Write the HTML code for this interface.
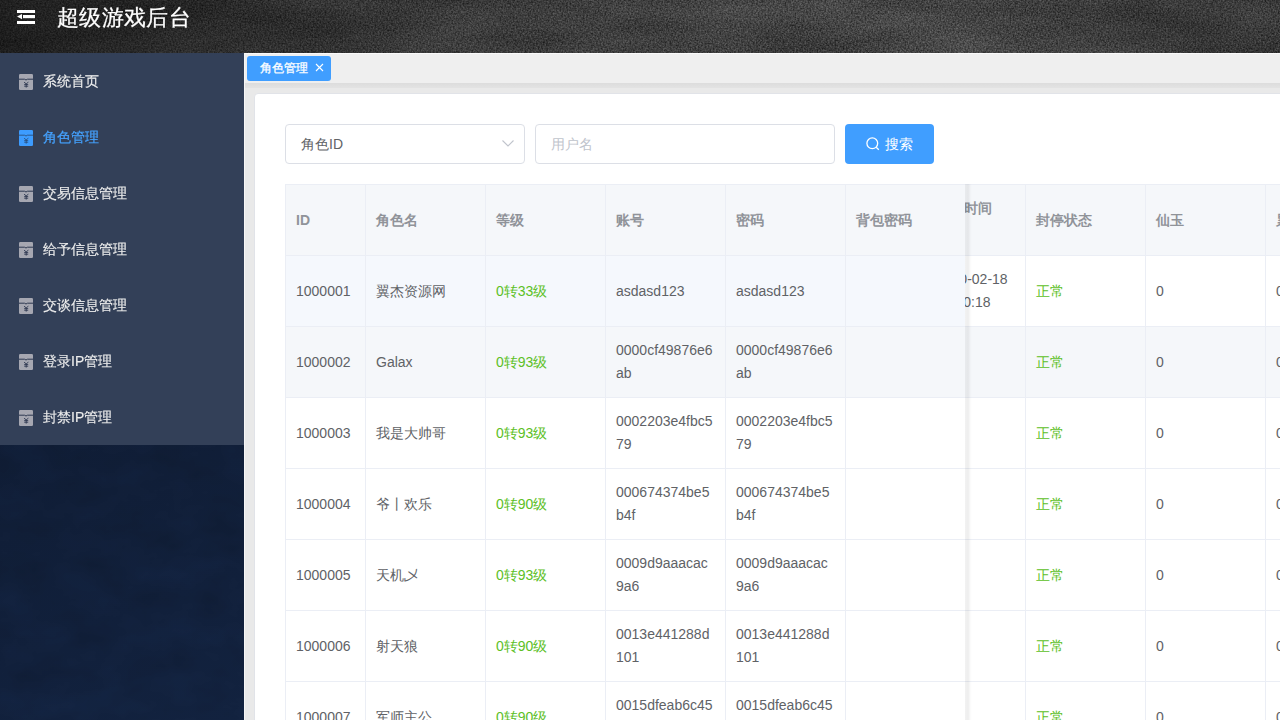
<!DOCTYPE html>
<html><head><meta charset="utf-8">
<style>
*{margin:0;padding:0;box-sizing:border-box;}
html,body{width:1280px;height:720px;overflow:hidden;font-family:"Liberation Sans",sans-serif;font-size:14px;}
body{position:relative;background:#f0f0f0;}
.hdr{position:absolute;left:0;top:0;width:1280px;height:53px;background:linear-gradient(90deg,#1d1d1d 0%,#242424 10%,#2e2e2e 20%,#373737 32%,#3d3d3d 45%,#424242 58%,#444 70%,#424242 80%,#3b3b3b 89%,#393939 95%,#3c3c3c 100%);overflow:hidden;isolation:isolate;}
.hdr svg.noise{position:absolute;left:0;top:0;}
.hdr .ham{position:absolute;left:17px;top:10px;}
.hdr .title{position:absolute;left:57px;top:3.5px;font-size:22.4px;letter-spacing:.35px;color:#fff;-webkit-text-stroke:.25px #fff;line-height:28px;}
.side{position:absolute;left:0;top:53px;width:244px;height:667px;isolation:isolate;background:linear-gradient(160deg,#0e1a2f 0%,#0f1c34 45%,#12223f 100%);overflow:hidden;}
.menu{position:absolute;left:0;top:0;width:244px;height:392px;background:#334058;}
.mi{position:absolute;left:0;width:244px;height:56px;}
.mi .ic{position:absolute;left:19px;top:21px;}
.mi .tx{position:absolute;left:43px;top:20px;line-height:16px;font-size:14px;color:#ececec;white-space:nowrap;-webkit-text-stroke:.15px #ececec;}
.mi.act .tx{color:#45a2ff;-webkit-text-stroke:.2px #45a2ff;}
.main{position:absolute;left:244px;top:53px;width:1036px;height:667px;background:#e9e9e9;border-left:1px solid #f6f6f6;}
.tabbar{position:absolute;left:0;top:0;width:1036px;height:30px;background:#efefef;border-top:1px solid #fafafa;}
.tabshadow{position:absolute;left:0;top:30px;width:1036px;height:5px;background:linear-gradient(#dcdcdc,#e3e3e3);}
.tag{position:absolute;left:2px;top:2px;width:84px;height:25px;background:#409eff;border-radius:3px;color:#fff;font-size:12px;line-height:25px;padding-left:13px;white-space:nowrap;-webkit-text-stroke:.3px #fff;}
.tag svg{position:absolute;left:68px;top:7px;}
.card{position:absolute;left:11px;top:41px;width:1040px;height:640px;background:#fff;border:1px solid #e6e6e6;border-radius:4px;}

.card2{position:absolute;left:254px;top:93px;width:1030px;height:640px;background:#fff;border:1px solid #e1e3e8;border-radius:4px;}
.sel{position:absolute;left:285px;top:124px;width:240px;height:40px;border:1px solid #dcdfe6;border-radius:4px;background:#fff;}
.sel .t{position:absolute;left:15px;top:0;line-height:38px;color:#606266;font-size:14px;}
.sel svg{position:absolute;left:216px;top:15px;}
.inp{position:absolute;left:535px;top:124px;width:300px;height:40px;border:1px solid #dcdfe6;border-radius:4px;background:#fff;}
.inp .t{position:absolute;left:15px;top:0;line-height:38px;color:#c0c4cc;font-size:14px;}
.btn{position:absolute;left:845px;top:124px;width:89px;height:40px;border-radius:4px;background:#409eff;color:#fff;}
.btn svg{position:absolute;left:21px;top:12.8px;}
.btn .t{position:absolute;left:40px;top:0;line-height:40px;font-size:14px;}
.tbl{position:absolute;left:285px;top:184px;width:995px;height:536px;overflow:hidden;background:#fff;}
.hl{position:absolute;height:1px;background:#ebeef5;}
.vl{position:absolute;width:1px;background:#ebeef5;}
.bg{position:absolute;}
.c{position:absolute;display:flex;align-items:center;padding-left:10px;line-height:23px;font-size:14px;color:#606266;white-space:nowrap;}
.c.h{color:#909399;font-weight:bold;}
.c.g{color:#5cc026;}
.shadow{position:absolute;top:0;width:7px;height:536px;background:linear-gradient(90deg,rgba(0,0,0,.05) 0,rgba(0,0,0,.065) 45%,rgba(0,0,0,.02) 75%,rgba(0,0,0,0) 100%);}
</style></head>
<body>
<div class="hdr">
  <svg class="noise" width="1280" height="53" style="mix-blend-mode:overlay"><filter id="nz" x="0" y="0" width="100%" height="100%" color-interpolation-filters="sRGB"><feTurbulence type="fractalNoise" baseFrequency="0.6" numOctaves="3" seed="3"/><feColorMatrix values="1.4 0 0 0 -0.2  1.4 0 0 0 -0.2  1.4 0 0 0 -0.2  0 0 0 0 1"/></filter><filter id="nz2" x="0" y="0" width="100%" height="100%" color-interpolation-filters="sRGB"><feTurbulence type="fractalNoise" baseFrequency="0.008 0.03" numOctaves="3" seed="11"/><feColorMatrix values="0.5 0 0 0 0.25  0.5 0 0 0 0.25  0.5 0 0 0 0.25  0 0 0 0 1"/></filter><rect width="1280" height="53" filter="url(#nz)"/><rect width="1280" height="53" filter="url(#nz2)" opacity=".5"/></svg>
  <svg class="ham" width="18" height="14" viewBox="0 0 18 14"><rect x="0" y="0" width="18" height="3" fill="#fff"/><rect x="6" y="5" width="12" height="3.2" fill="#fff"/><polygon points="0,6.5 5,4 5,9.3" fill="#fff"/><rect x="0" y="11" width="18" height="3" fill="#fff"/></svg>
  <div class="title">超级游戏后台</div>
</div>
<div class="side">
  <svg width="244" height="667" style="position:absolute;left:0;top:0;mix-blend-mode:overlay"><filter id="sn" x="0" y="0" width="100%" height="100%" color-interpolation-filters="sRGB"><feTurbulence type="fractalNoise" baseFrequency="0.02 0.03" numOctaves="4" seed="5"/><feColorMatrix values="0.12 0 0 0 0.44  0.12 0 0 0 0.44  0.12 0 0 0 0.44  0 0 0 0 1"/></filter><rect width="244" height="667" filter="url(#sn)"/></svg>
  <div class="menu">
    <div class="mi" style="top:0"><svg class="ic" width="14" height="16"><use href="#icg"/></svg><span class="tx">系统首页</span></div>
    <div class="mi act" style="top:56px"><svg class="ic" width="14" height="16"><use href="#icb"/></svg><span class="tx">角色管理</span></div>
    <div class="mi" style="top:112px"><svg class="ic" width="14" height="16"><use href="#icg"/></svg><span class="tx">交易信息管理</span></div>
    <div class="mi" style="top:168px"><svg class="ic" width="14" height="16"><use href="#icg"/></svg><span class="tx">给予信息管理</span></div>
    <div class="mi" style="top:224px"><svg class="ic" width="14" height="16"><use href="#icg"/></svg><span class="tx">交谈信息管理</span></div>
    <div class="mi" style="top:280px"><svg class="ic" width="14" height="16"><use href="#icg"/></svg><span class="tx">登录IP管理</span></div>
    <div class="mi" style="top:336px"><svg class="ic" width="14" height="16"><use href="#icg"/></svg><span class="tx">封禁IP管理</span></div>
  </div>
</div>
<svg width="0" height="0" style="position:absolute">
  <defs>
    <g id="icg"><rect x="0" y="0" width="14" height="16" rx="1.2" fill="#a6a7b1"/><path d="M0 5.2H5.5L7 6L8.5 5.2H14" stroke="#2e3850" stroke-width="1" fill="none"/><path d="M5 8.2L7.2 9.8L9.4 8.2M7.2 9.8V13.6M5.2 10.6H9.2M5.2 12.2H9.2" stroke="#2e3850" stroke-width=".9" fill="none"/></g>
    <g id="icb"><rect x="0" y="0" width="14" height="16" rx="1.2" fill="#3d9cff"/><path d="M0 5.2H5.5L7 6L8.5 5.2H14" stroke="#28476f" stroke-width="1" fill="none" opacity=".8"/><path d="M5 8.2L7.2 9.8L9.4 8.2M7.2 9.8V13.6M5.2 10.6H9.2M5.2 12.2H9.2" stroke="#28476f" stroke-width=".9" fill="none" opacity=".85"/></g>
  </defs>
</svg>
<div class="main">
  <div class="tabbar"><div class="tag">角色管理<svg width="9" height="9" viewBox="0 0 9 9"><path d="M1 1L8 8M8 1L1 8" stroke="#fff" stroke-width="1.1"/></svg></div></div>
  <div class="tabshadow"></div>
  </div>
<div class="card2"></div>
<div class="sel"><span class="t">角色ID</span><svg width="12" height="7" viewBox="0 0 12 7"><path d="M0.5 0.5L6 6L11.5 0.5" stroke="#c0c4cc" stroke-width="1.1" fill="none"/></svg></div>
<div class="inp"><span class="t">用户名</span></div>
<div class="btn"><svg width="14" height="14" viewBox="0 0 14 14"><circle cx="6.3" cy="6.3" r="5.4" stroke="#fff" stroke-width="1.3" fill="none"/><path d="M10.2 10.2L12.8 12.8" stroke="#fff" stroke-width="1.3"/></svg><span class="t">搜索</span></div>
<div class="tbl">
<div class="bg" style="left:0;top:1px;width:995px;height:70px;background:#f5f7fa"></div>
<div class="bg" style="left:0;top:72px;width:680px;height:70px;background:#f5f8fd"></div>
<div class="bg" style="left:0;top:143px;width:995px;height:70px;background:#f5f7fa"></div>
<div class="hl" style="left:0;top:0px;width:995px"></div>
<div class="hl" style="left:0;top:71px;width:995px"></div>
<div class="hl" style="left:0;top:142px;width:995px"></div>
<div class="hl" style="left:0;top:213px;width:995px"></div>
<div class="hl" style="left:0;top:284px;width:995px"></div>
<div class="hl" style="left:0;top:355px;width:995px"></div>
<div class="hl" style="left:0;top:426px;width:995px"></div>
<div class="hl" style="left:0;top:497px;width:995px"></div>
<div class="vl" style="left:0px;top:0;height:536px"></div>
<div class="vl" style="left:80px;top:0;height:536px"></div>
<div class="vl" style="left:200px;top:0;height:536px"></div>
<div class="vl" style="left:320px;top:0;height:536px"></div>
<div class="vl" style="left:440px;top:0;height:536px"></div>
<div class="vl" style="left:560px;top:0;height:536px"></div>
<div class="vl" style="left:740px;top:0;height:536px"></div>
<div class="vl" style="left:860px;top:0;height:536px"></div>
<div class="vl" style="left:980px;top:0;height:536px"></div>
<div class="c h" style="left:1px;top:1px;width:80px;height:70px"><span>ID</span></div>
<div class="c h" style="left:81px;top:1px;width:120px;height:70px"><span>角色名</span></div>
<div class="c h" style="left:201px;top:1px;width:120px;height:70px"><span>等级</span></div>
<div class="c h" style="left:321px;top:1px;width:120px;height:70px"><span>账号</span></div>
<div class="c h" style="left:441px;top:1px;width:120px;height:70px"><span>密码</span></div>
<div class="c h" style="left:561px;top:1px;width:120px;height:70px"><span>背包密码</span></div>
<div class="c h" style="left:741px;top:1px;width:120px;height:70px"><span>封停状态</span></div>
<div class="c h" style="left:861px;top:1px;width:120px;height:70px"><span>仙玉</span></div>
<div class="c h" style="left:981px;top:1px;width:120px;height:70px"><span>累计充值</span></div>
<div class="c h" style="left:641px;top:1px;width:100px;height:70px"><span>注册时间<br>&nbsp;</span></div>
<div class="c " style="left:1px;top:72px;width:80px;height:70px"><span>1000001</span></div>
<div class="c " style="left:81px;top:72px;width:120px;height:70px"><span>翼杰资源网</span></div>
<div class="c g" style="left:201px;top:72px;width:120px;height:70px"><span>0转33级</span></div>
<div class="c " style="left:321px;top:72px;width:120px;height:70px"><span>asdasd123</span></div>
<div class="c " style="left:441px;top:72px;width:120px;height:70px"><span>asdasd123</span></div>
<div class="c " style="left:641px;top:72px;width:100px;height:70px"><span>2020-02-18<br>10:00:18</span></div>
<div class="c g" style="left:741px;top:72px;width:120px;height:70px"><span>正常</span></div>
<div class="c " style="left:861px;top:72px;width:120px;height:70px"><span>0</span></div>
<div class="c " style="left:981px;top:72px;width:120px;height:70px"><span>0</span></div>
<div class="c " style="left:1px;top:143px;width:80px;height:70px"><span>1000002</span></div>
<div class="c " style="left:81px;top:143px;width:120px;height:70px"><span>Galax</span></div>
<div class="c g" style="left:201px;top:143px;width:120px;height:70px"><span>0转93级</span></div>
<div class="c " style="left:321px;top:143px;width:120px;height:70px"><span>0000cf49876e6<br>ab</span></div>
<div class="c " style="left:441px;top:143px;width:120px;height:70px"><span>0000cf49876e6<br>ab</span></div>
<div class="c g" style="left:741px;top:143px;width:120px;height:70px"><span>正常</span></div>
<div class="c " style="left:861px;top:143px;width:120px;height:70px"><span>0</span></div>
<div class="c " style="left:981px;top:143px;width:120px;height:70px"><span>0</span></div>
<div class="c " style="left:1px;top:214px;width:80px;height:70px"><span>1000003</span></div>
<div class="c " style="left:81px;top:214px;width:120px;height:70px"><span>我是大帅哥</span></div>
<div class="c g" style="left:201px;top:214px;width:120px;height:70px"><span>0转93级</span></div>
<div class="c " style="left:321px;top:214px;width:120px;height:70px"><span>0002203e4fbc5<br>79</span></div>
<div class="c " style="left:441px;top:214px;width:120px;height:70px"><span>0002203e4fbc5<br>79</span></div>
<div class="c g" style="left:741px;top:214px;width:120px;height:70px"><span>正常</span></div>
<div class="c " style="left:861px;top:214px;width:120px;height:70px"><span>0</span></div>
<div class="c " style="left:981px;top:214px;width:120px;height:70px"><span>0</span></div>
<div class="c " style="left:1px;top:285px;width:80px;height:70px"><span>1000004</span></div>
<div class="c " style="left:81px;top:285px;width:120px;height:70px"><span>爷丨欢乐</span></div>
<div class="c g" style="left:201px;top:285px;width:120px;height:70px"><span>0转90级</span></div>
<div class="c " style="left:321px;top:285px;width:120px;height:70px"><span>000674374be5<br>b4f</span></div>
<div class="c " style="left:441px;top:285px;width:120px;height:70px"><span>000674374be5<br>b4f</span></div>
<div class="c g" style="left:741px;top:285px;width:120px;height:70px"><span>正常</span></div>
<div class="c " style="left:861px;top:285px;width:120px;height:70px"><span>0</span></div>
<div class="c " style="left:981px;top:285px;width:120px;height:70px"><span>0</span></div>
<div class="c " style="left:1px;top:356px;width:80px;height:70px"><span>1000005</span></div>
<div class="c " style="left:81px;top:356px;width:120px;height:70px"><span>天机乄</span></div>
<div class="c g" style="left:201px;top:356px;width:120px;height:70px"><span>0转93级</span></div>
<div class="c " style="left:321px;top:356px;width:120px;height:70px"><span>0009d9aaacac<br>9a6</span></div>
<div class="c " style="left:441px;top:356px;width:120px;height:70px"><span>0009d9aaacac<br>9a6</span></div>
<div class="c g" style="left:741px;top:356px;width:120px;height:70px"><span>正常</span></div>
<div class="c " style="left:861px;top:356px;width:120px;height:70px"><span>0</span></div>
<div class="c " style="left:981px;top:356px;width:120px;height:70px"><span>0</span></div>
<div class="c " style="left:1px;top:427px;width:80px;height:70px"><span>1000006</span></div>
<div class="c " style="left:81px;top:427px;width:120px;height:70px"><span>射天狼</span></div>
<div class="c g" style="left:201px;top:427px;width:120px;height:70px"><span>0转90级</span></div>
<div class="c " style="left:321px;top:427px;width:120px;height:70px"><span>0013e441288d<br>101</span></div>
<div class="c " style="left:441px;top:427px;width:120px;height:70px"><span>0013e441288d<br>101</span></div>
<div class="c g" style="left:741px;top:427px;width:120px;height:70px"><span>正常</span></div>
<div class="c " style="left:861px;top:427px;width:120px;height:70px"><span>0</span></div>
<div class="c " style="left:981px;top:427px;width:120px;height:70px"><span>0</span></div>
<div class="c " style="left:1px;top:498px;width:80px;height:70px"><span>1000007</span></div>
<div class="c " style="left:81px;top:498px;width:120px;height:70px"><span>军师主公</span></div>
<div class="c g" style="left:201px;top:498px;width:120px;height:70px"><span>0转90级</span></div>
<div class="c " style="left:321px;top:498px;width:120px;height:70px"><span>0015dfeab6c45<br>5f0</span></div>
<div class="c " style="left:441px;top:498px;width:120px;height:70px"><span>0015dfeab6c45<br>5f0</span></div>
<div class="c g" style="left:741px;top:498px;width:120px;height:70px"><span>正常</span></div>
<div class="c " style="left:861px;top:498px;width:120px;height:70px"><span>0</span></div>
<div class="c " style="left:981px;top:498px;width:120px;height:70px"><span>0</span></div>
<div class="bg" style="left:0;top:0;width:680px;height:536px;background:#fff"></div>
<div class="bg" style="left:0;top:1px;width:680px;height:70px;background:#f5f7fa"></div>
<div class="bg" style="left:0;top:72px;width:680px;height:70px;background:#f5f8fd"></div>
<div class="bg" style="left:0;top:143px;width:680px;height:70px;background:#f5f7fa"></div>
<div class="hl" style="left:0;top:0px;width:680px"></div>
<div class="hl" style="left:0;top:71px;width:680px"></div>
<div class="hl" style="left:0;top:142px;width:680px"></div>
<div class="hl" style="left:0;top:213px;width:680px"></div>
<div class="hl" style="left:0;top:284px;width:680px"></div>
<div class="hl" style="left:0;top:355px;width:680px"></div>
<div class="hl" style="left:0;top:426px;width:680px"></div>
<div class="hl" style="left:0;top:497px;width:680px"></div>
<div class="vl" style="left:0px;top:0;height:536px"></div>
<div class="vl" style="left:80px;top:0;height:536px"></div>
<div class="vl" style="left:200px;top:0;height:536px"></div>
<div class="vl" style="left:320px;top:0;height:536px"></div>
<div class="vl" style="left:440px;top:0;height:536px"></div>
<div class="vl" style="left:560px;top:0;height:536px"></div>
<div class="c h" style="left:1px;top:1px;width:80px;height:70px"><span>ID</span></div>
<div class="c h" style="left:81px;top:1px;width:120px;height:70px"><span>角色名</span></div>
<div class="c h" style="left:201px;top:1px;width:120px;height:70px"><span>等级</span></div>
<div class="c h" style="left:321px;top:1px;width:120px;height:70px"><span>账号</span></div>
<div class="c h" style="left:441px;top:1px;width:120px;height:70px"><span>密码</span></div>
<div class="c h" style="left:561px;top:1px;width:120px;height:70px"><span>背包密码</span></div>
<div class="c " style="left:1px;top:72px;width:80px;height:70px"><span>1000001</span></div>
<div class="c " style="left:81px;top:72px;width:120px;height:70px"><span>翼杰资源网</span></div>
<div class="c g" style="left:201px;top:72px;width:120px;height:70px"><span>0转33级</span></div>
<div class="c " style="left:321px;top:72px;width:120px;height:70px"><span>asdasd123</span></div>
<div class="c " style="left:441px;top:72px;width:120px;height:70px"><span>asdasd123</span></div>
<div class="c " style="left:1px;top:143px;width:80px;height:70px"><span>1000002</span></div>
<div class="c " style="left:81px;top:143px;width:120px;height:70px"><span>Galax</span></div>
<div class="c g" style="left:201px;top:143px;width:120px;height:70px"><span>0转93级</span></div>
<div class="c " style="left:321px;top:143px;width:120px;height:70px"><span>0000cf49876e6<br>ab</span></div>
<div class="c " style="left:441px;top:143px;width:120px;height:70px"><span>0000cf49876e6<br>ab</span></div>
<div class="c " style="left:1px;top:214px;width:80px;height:70px"><span>1000003</span></div>
<div class="c " style="left:81px;top:214px;width:120px;height:70px"><span>我是大帅哥</span></div>
<div class="c g" style="left:201px;top:214px;width:120px;height:70px"><span>0转93级</span></div>
<div class="c " style="left:321px;top:214px;width:120px;height:70px"><span>0002203e4fbc5<br>79</span></div>
<div class="c " style="left:441px;top:214px;width:120px;height:70px"><span>0002203e4fbc5<br>79</span></div>
<div class="c " style="left:1px;top:285px;width:80px;height:70px"><span>1000004</span></div>
<div class="c " style="left:81px;top:285px;width:120px;height:70px"><span>爷丨欢乐</span></div>
<div class="c g" style="left:201px;top:285px;width:120px;height:70px"><span>0转90级</span></div>
<div class="c " style="left:321px;top:285px;width:120px;height:70px"><span>000674374be5<br>b4f</span></div>
<div class="c " style="left:441px;top:285px;width:120px;height:70px"><span>000674374be5<br>b4f</span></div>
<div class="c " style="left:1px;top:356px;width:80px;height:70px"><span>1000005</span></div>
<div class="c " style="left:81px;top:356px;width:120px;height:70px"><span>天机乄</span></div>
<div class="c g" style="left:201px;top:356px;width:120px;height:70px"><span>0转93级</span></div>
<div class="c " style="left:321px;top:356px;width:120px;height:70px"><span>0009d9aaacac<br>9a6</span></div>
<div class="c " style="left:441px;top:356px;width:120px;height:70px"><span>0009d9aaacac<br>9a6</span></div>
<div class="c " style="left:1px;top:427px;width:80px;height:70px"><span>1000006</span></div>
<div class="c " style="left:81px;top:427px;width:120px;height:70px"><span>射天狼</span></div>
<div class="c g" style="left:201px;top:427px;width:120px;height:70px"><span>0转90级</span></div>
<div class="c " style="left:321px;top:427px;width:120px;height:70px"><span>0013e441288d<br>101</span></div>
<div class="c " style="left:441px;top:427px;width:120px;height:70px"><span>0013e441288d<br>101</span></div>
<div class="c " style="left:1px;top:498px;width:80px;height:70px"><span>1000007</span></div>
<div class="c " style="left:81px;top:498px;width:120px;height:70px"><span>军师主公</span></div>
<div class="c g" style="left:201px;top:498px;width:120px;height:70px"><span>0转90级</span></div>
<div class="c " style="left:321px;top:498px;width:120px;height:70px"><span>0015dfeab6c45<br>5f0</span></div>
<div class="c " style="left:441px;top:498px;width:120px;height:70px"><span>0015dfeab6c45<br>5f0</span></div>
<div class="shadow" style="left:680px"></div>
</div>
</body></html>
